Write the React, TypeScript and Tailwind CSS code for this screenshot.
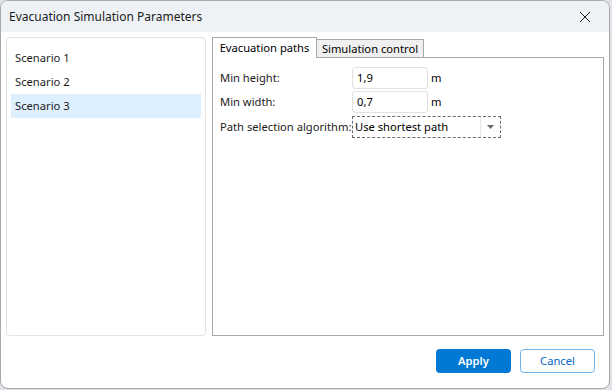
import React, { useState } from 'react';

const font = { fontFamily: '"Noto Sans", "Open Sans", sans-serif' };

const scenarios = ['Scenario 1', 'Scenario 2', 'Scenario 3'];

const NumberRow = ({ label, value }: { label: string; value: string }) => (
  <div className="flex items-center h-[24px]">
    <span className="w-[132px] text-[11.2px] text-[#1b1b1b]">{label}</span>
    <div className="w-[76px] h-[22px] border border-[#e1e1e1] rounded-[3px] bg-white flex items-center px-[4px] text-[11.2px] text-black">
      {value}
    </div>
    <span className="ml-[3px] text-[11.2px] text-black">m</span>
  </div>
);

const App: React.FC = () => {
  const [selected, setSelected] = useState(2);

  return (
    <div className="w-[612px] h-[390px] bg-[#dfe3e8]" style={font}>
      <div className="w-[610px] h-[389px] bg-white border border-[#a8a8a8] rounded-[8px] overflow-hidden flex flex-col">
        <div className="h-[31px] bg-[#eef2f6] flex items-center justify-between pl-[8px] pr-[18px] shrink-0">
          <span className="text-[12px] text-[#1b1b1b]">Evacuation Simulation Parameters</span>
          <svg width="12" height="12" viewBox="0 0 12 12">
            <path d="M1 1L11 11M11 1L1 11" stroke="#1b1b1b" strokeWidth="1" />
          </svg>
        </div>

        <div className="flex gap-[6px] px-[5px] pt-[5px] h-[304px] shrink-0">
          <div className="w-[200px] h-[299px] border border-[#e3e3e3] rounded-[4px] pt-[8px] px-[4px]">
            {scenarios.map((s, i) => (
              <div
                key={s}
                onClick={() => setSelected(i)}
                className={`h-[24px] flex items-center pl-[4px] text-[11.2px] text-[#1b1b1b] ${
                  selected === i ? 'bg-[#deeffd]' : ''
                }`}
              >
                {s}
              </div>
            ))}
          </div>

          <div className="flex-1 h-[299px] flex flex-col">
            <div className="flex items-end h-[21px] shrink-0">
              <div className="h-[21px] w-[105px] border border-b-0 border-[#a8a8a8] bg-white flex items-center justify-center text-[11.2px] text-black relative z-10">
                Evacuation paths
              </div>
              <div className="h-[19px] w-[107px] border border-l-0 border-b-0 border-[#a8a8a8] bg-[#f0f0f0] flex items-center justify-center text-[11.2px] text-black">
                Simulation control
              </div>
            </div>
            <div className="flex-1 -mt-px border border-[#a8a8a8] pt-[8px] px-[7px] flex flex-col">
              <NumberRow label="Min height:" value="1,9" />
              <NumberRow label="Min width:" value="0,7" />
              <div className="flex items-center h-[24px] mt-[1px]">
                <span className="w-[132px] text-[11.2px] text-[#1b1b1b] whitespace-nowrap">Path selection algorithm:</span>
                <div className="w-[149px] h-[22px] border border-dashed border-[#6a6a6a] bg-white flex items-center text-[11.2px] text-black">
                  <span className="flex-1 pl-[2px]">Use shortest path</span>
                  <div className="w-[20px] h-full border-l border-[#e6e6e6] flex items-center justify-center">
                    <svg width="7" height="4" viewBox="0 0 7 4">
                      <path d="M0 0H7L3.5 4Z" fill="#6a6a6a" />
                    </svg>
                  </div>
                </div>
              </div>
            </div>
          </div>
        </div>

        <div className="flex-1 flex items-center justify-end gap-[9px] pr-[14px] pb-[2px]">
          <button className="w-[75px] h-[24px] rounded-[4px] bg-[#0078d4] text-white text-[11.2px] font-semibold">
            Apply
          </button>
          <button className="w-[75px] h-[24px] rounded-[4px] border border-[#6ab4f0] bg-white text-[#0067c0] text-[11.2px]">
            Cancel
          </button>
        </div>
      </div>
    </div>
  );
};

export default App;
